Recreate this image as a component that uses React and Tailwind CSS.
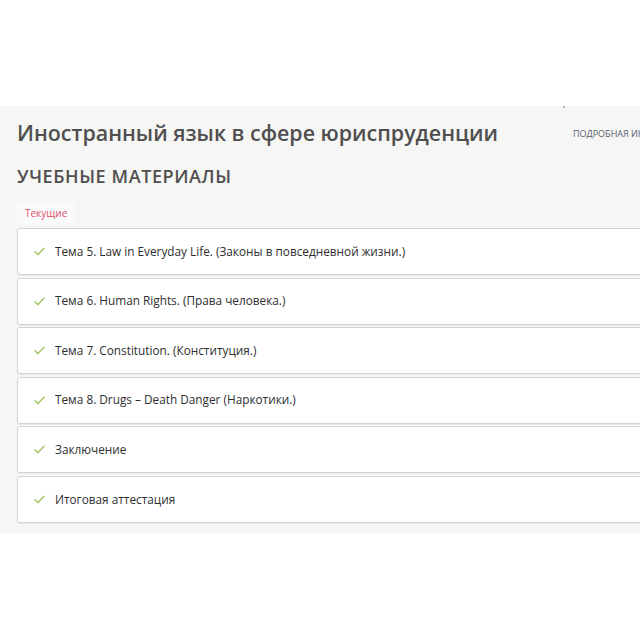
import React from "react";

const items = [
  "Тема 5. Law in Everyday Life. (Законы в повседневной жизни.)",
  "Тема 6. Human Rights. (Права человека.)",
  "Тема 7. Constitution. (Конституция.)",
  "Тема 8. Drugs – Death Danger (Наркотики.)",
  "Заключение",
  "Итоговая аттестация",
];

function Check() {
  return (
    <svg width="11" height="9" viewBox="0 0 11 9" className="shrink-0">
      <path d="M1 4.8 L4 7.6 L10 1.2" fill="none" stroke="#a3c76a" strokeWidth="1.5" strokeLinecap="round" strokeLinejoin="round" />
    </svg>
  );
}

export default function App() {
  return (
    <div className="w-[640px] h-[640px] bg-white overflow-hidden" style={{ fontFamily: '"Open Sans", "Liberation Sans", sans-serif' }}>
      <div className="h-[106px]" />
      <div className="relative bg-[#f6f6f5] w-[680px] pl-[17px] pt-[10px] pb-[10px]">
        <div className="absolute left-[563px] top-0 w-[2px] h-[2px] bg-[#bbb]" />
        <div className="flex items-center h-[34px]">
          <h1 className="text-[21.4px] font-semibold text-[#4f4f4f] w-[556px] shrink-0 whitespace-nowrap">Иностранный язык в сфере юриспруденции</h1>
          <span className="text-[9px] text-[#5a6070] uppercase mt-[2px] whitespace-nowrap">Подробная информация</span>
        </div>
        <h2 className="mt-[14px] text-[18px] font-semibold text-[#4f4f4f] leading-[24px] tracking-[0.6px]">УЧЕБНЫЕ МАТЕРИАЛЫ</h2>
        <div className="mt-[14px] flex">
          <div className="bg-[#fafafa] px-[8px] h-[22px] flex items-center text-[10px] text-[#e0506c]">Текущие</div>
        </div>
        <div className="mt-[4px] flex flex-col gap-[2.6px]">
          {items.map((t) => (
            <div key={t} className="h-[47px] bg-white border border-[#d4d4d4] rounded-[3px] shadow-[0_1px_1px_rgba(0,0,0,0.06)] flex items-center pl-[16px] gap-[10px]">
              <Check />
              <span className="text-[11.8px] text-[#2e2e2e]">{t}</span>
            </div>
          ))}
        </div>
      </div>
    </div>
  );
}
